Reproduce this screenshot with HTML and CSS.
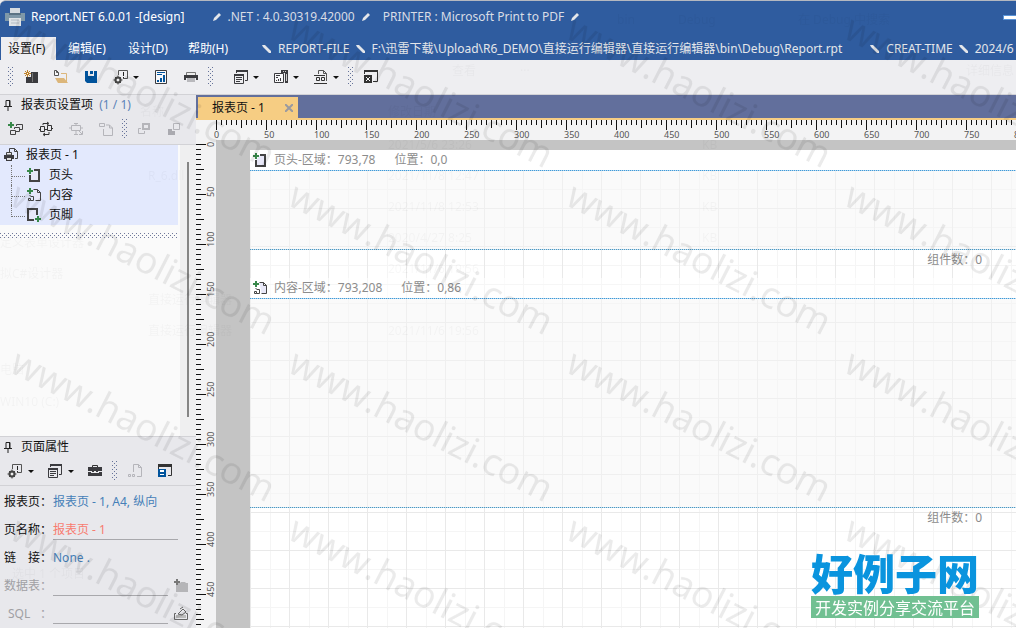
FILE: index.html
```html
<!DOCTYPE html>
<html lang="zh-CN">
<head>
<meta charset="utf-8">
<title>Report.NET 6.0.01 -[design]</title>
<link rel="stylesheet" href="styles.css">
</head>
<body>
<svg class="defs" aria-hidden="true">
  <defs>
    <symbol id="pen" viewBox="0 0 10 10"><path d="M1 9l1-3 5-5 2 2-5 5z" fill="#e4e6ea"/></symbol>
    <symbol id="pen-l" viewBox="0 0 10 10"><path d="M0 1l3 0 6 6v2l-2 0-6-6z" fill="#e4e6ea"/></symbol>
    <symbol id="new" viewBox="0 0 16 16"><path d="M8 3h7v11H3V8h5z" fill="#3b3b3f"/><path d="M9 4h1v9H9z" fill="#777"/><path d="M4.500 1v7M1 4.500h7M2 2l5 5M7 2l-5 5" stroke="#c08228"/><path d="M4 4h1v1H4z" fill="#fff"/></symbol>
    <symbol id="open" viewBox="0 0 16 16"><path d="M1.500 1.500h2l2 2v3h-4zM3.500 1.500v2h2" fill="#f8f8fa" stroke="#555"/><path d="M8 4.500h5.500V13" fill="none" stroke="#dcb67a"/><path d="M2 9h9l4 5H5z" fill="#dcb67a"/></symbol>
    <symbol id="save" viewBox="0 0 16 16"><path d="M2 2h3v5h6V2h3v12H4l-2-2z" fill="#00539c"/><path d="M7 2h3v3H7z" fill="#00539c"/></symbol>
    <symbol id="cfg" viewBox="0 0 16 16"><path d="M5.500 6V1.500h9v8H10" fill="none" stroke="#555"/><path d="M10 3h1v4h-1zM10 8h1v1h-1z" fill="#222"/><circle cx="5" cy="11" r="2.500" fill="none" stroke="#444" stroke-width="2"/><path d="M5 6.500v9M.5 11h9M2 8l6 6M8 8l-6 6" stroke="#444"/><circle cx="5" cy="11" r="1.300" fill="#eee"/></symbol>
    <symbol id="chart" viewBox="0 0 16 16"><path d="M2.500 1.500h11v13h-11z" fill="#f8f8fa" stroke="#3b3b3f"/><path d="M4 3h8v1H4zM4 5h5v1H4z" fill="#00539c"/><path d="M4 11h2v2H4zM7 9h2v4H7zM10 6h2v7h-2z" fill="#00539c"/></symbol>
    <symbol id="print" viewBox="0 0 16 16"><path d="M3.500 3.500h9V7h-9z" fill="#eee" stroke="#777"/><path d="M1 6h14v5h-2V9H3v2H1z" fill="#3b3b3f"/><path d="M4 9h8v4H4z" fill="#b9b9bd"/></symbol>
    <symbol id="pages" viewBox="0 0 16 16"><path d="M3 1h12v2H3zM1 5h10v2H1z" fill="#3b3b3f"/><path d="M3.500 4V1.500h11v10H12M1.500 5.500h9v9h-9z" fill="none" stroke="#3b3b3f"/><path d="M3 8.500h6M3 10.500h6M3 12.500h4" stroke="#3b3b3f"/></symbol>
    <symbol id="report" viewBox="0 0 16 16"><path d="M8 1h7v13h-3V4H8z" fill="#3b3b3f"/><path d="M1.500 4.500h9v9h-9z" fill="#f8f8fa" stroke="#3b3b3f"/><path d="M3 6.500h4M3 8.500h2" stroke="#3b3b3f"/><path d="M3 11h1v1H3zM5 10h1v2H5zM7 9h1v3H7z" fill="#3b3b3f"/><path d="M10 2h1v1h-1zM12 2h1v1h-1zM13 5h1v7h-1z" fill="#ccc"/></symbol>
    <symbol id="label" viewBox="0 0 16 16"><path d="M5.500 5V1.500h5l3 3V12M10.500 1.500v3h3" fill="none" stroke="#555"/><path d="M1 6.500h11M1 14.500h13" stroke="#333"/><path d="M3.500 8.500h3v3h-3zM8.500 8.500h3v3h-3z" fill="none" stroke="#333"/></symbol>
    <symbol id="closewin" viewBox="0 0 16 16"><path d="M1 1h14v2H1z" fill="#333"/><path d="M1.500 3v2M14.500 3v9.500H10" fill="none" stroke="#333"/><path d="M1 6h8v8H1z" fill="#333"/><path d="M3 8l4 4M7 8l-4 4" stroke="#fff"/></symbol>
    <symbol id="pin" viewBox="0 0 10 14"><path d="M3 2.500h4v6H3zM1 8.500h8M5 9v4M6.500 3v6" fill="none" stroke="#222"/></symbol>
    <symbol id="addset" viewBox="0 0 16 16"><path d="M8.500 5V3.500h6v5H12M6.500 8V6.500h5v4H8M2.500 9.500h5v4h-5z" fill="none" stroke="#444"/><path d="M3 1v6M0 4h6" stroke="#38884a" stroke-width="2"/></symbol>
    <symbol id="swap" viewBox="0 0 16 16"><path d="M2.500 5.500h4v5h-4zM9.500 4.500h4v5h-4zM1 8.500h2M13 7.500h2M6 8.500h4M5 4V2.500h5M9 1l2 1.500L9 4M11 11v2.500H6M7 12l-2 1.500L7 15" fill="none" stroke="#333"/></symbol>
    <symbol id="move" viewBox="0 0 16 16"><path d="M3.500 4.500h9v5h-9zM8 2v2M8 10v3M1 7h2M13 7h2M11 10l3 3M14.500 10v3.500H11M6 2.500h4M6 13.500h4" fill="none" stroke="#b5b5ba"/></symbol>
    <symbol id="copy" viewBox="0 0 16 16"><path d="M1.500 2.500h5v3h-5zM5.500 8v6.500h9V7l-3-3H8M11.500 4v3h3" fill="none" stroke="#b5b5ba"/></symbol>
    <symbol id="front" viewBox="0 0 16 16"><path d="M7 3h6v5H7z" fill="none" stroke="#b5b5ba" stroke-width="2"/><path d="M5 7.500H2.500v5h6V10" fill="none" stroke="#b5b5ba"/></symbol>
    <symbol id="back" viewBox="0 0 16 16"><path d="M7.500 2.500h6v6h-6z" fill="none" stroke="#b5b5ba"/><path d="M2 8h4v2h3v4H2z" fill="#aaaab0"/></symbol>
    <symbol id="printdoc" viewBox="0 0 16 16"><path d="M6.500 5V1.500h5l3 3v7H12M11.500 1.500v3h3" fill="none" stroke="#444"/><path d="M1 8h10v4H9v2H3v-2H1z" fill="#3b3b3f"/><path d="M3.500 5.500h5V8h-5z" fill="#eee" stroke="#444"/><path d="M4 11h4v2H4z" fill="#ddd"/></symbol>
    <symbol id="head" viewBox="0 0 16 16"><path d="M8 3h5v11H4V8" fill="#e8e8f8" stroke="#444" stroke-width="2"/><path d="M4 1v6M1 4h6" stroke="#38884a" stroke-width="2"/></symbol>
    <symbol id="content" viewBox="0 0 16 16"><path d="M7.500 2.500h4l3 3v8h-5M11.500 2.500v3h3M4 8v1" fill="#e8e8f8" stroke="#444"/><path d="M2.500 11.500h2v2h-2zM4.500 9.500h3v4h-3" fill="none" stroke="#444"/><path d="M4 1v6M1 4h6" stroke="#38884a" stroke-width="2"/></symbol>
    <symbol id="foot" viewBox="0 0 16 16"><path d="M8 13H2V2h9v6" fill="#e8e8f8" stroke="#444" stroke-width="2"/><path d="M12 9v6M9 12h6" stroke="#38884a" stroke-width="2"/></symbol>
    <symbol id="toolbox" viewBox="0 0 16 16"><path d="M5.500 5V2.500h5V5" fill="none" stroke="#333"/><path d="M1 4h14v4h-4v1H5V8H1zM1 9h3v1h8V9h3v4H1z" fill="#3b3b3f"/><path d="M7 8h2v2H7z" fill="#eee"/></symbol>
    <symbol id="docoff" viewBox="0 0 16 16"><path d="M6.500 9V1.500h5l3 3v9H10M11.500 1.500v3h3M1.500 11.500h2v2h-2zM5.500 11.500h2v2h-2z" fill="none" stroke="#b5b5ba"/></symbol>
    <symbol id="savewin" viewBox="0 0 16 16"><path d="M1 1h14v3H1z" fill="#333"/><path d="M14.500 3v9.500H11M1.500 3v3" fill="none" stroke="#333"/><path d="M1 6h8v8H1z" fill="#00539c"/><path d="M3 7h4v2H3zM3 11h4v1H3z" fill="#fff"/></symbol>
    <symbol id="addfolder" viewBox="0 0 16 16"><path d="M3 5h4l1-1h4l1 1h2v9H3z" fill="#b5b5b8"/><path d="M4 1v6M1 4h6" stroke="#777" stroke-width="2"/></symbol>
    <symbol id="edit" viewBox="0 0 16 16"><path d="M3 7.500H1.500v6h13v-6H13" fill="none" stroke="#666"/><path d="M3 9h10v3H3z" fill="#bbb"/><path d="M5 8l5-5 3 3-4 3z" fill="#e8e8ec" stroke="#666"/><path d="M7 3l3-2" stroke="#666"/></symbol>
  </defs>
</svg>

<header class="titlebar">
  <svg class="logo" viewBox="0 0 20 20" aria-hidden="true"><path d="M5 1h10v6H5z" fill="#d5dbe0"/><path d="M0 6h20v8H0z" fill="#7f98a8"/><path d="M4 6h12v2H4z" fill="#5b7384"/><path d="M4 11h12v8H4z" fill="#dfe3e6"/><path d="M6 13h8M6 16h8" stroke="#b3bcc4"/></svg>
  <h1>Report.NET 6.0.01 -[design]</h1>
  <p class="info"><svg class="pen"><use href="#pen"/></svg><span>.NET : 4.0.30319.42000</span><svg class="pen"><use href="#pen"/></svg></p>
  <p class="info"><span>PRINTER : Microsoft Print to PDF</span><svg class="pen"><use href="#pen"/></svg></p>
  <button class="minimize" aria-label="最小化"></button>
</header>

<nav class="menubar">
  <button class="menu active">设置(F)</button>
  <button class="menu">编辑(E)</button>
  <button class="menu">设计(D)</button>
  <button class="menu">帮助(H)</button>
  <p class="file"><svg class="pen"><use href="#pen-l"/></svg><span>REPORT-FILE</span><svg class="pen"><use href="#pen-l"/></svg><span>F:\迅雷下载\Upload\R6_DEMO\直接运行编辑器\直接运行编辑器\bin\Debug\Report.rpt</span></p>
  <p class="file"><svg class="pen"><use href="#pen-l"/></svg><span>CREAT-TIME</span><svg class="pen"><use href="#pen-l"/></svg><span>2024/6</span></p>
</nav>

<div class="toolbar">
  <i class="grip"></i>
  <button class="tool" aria-label="新建"><svg><use href="#new"/></svg></button>
  <button class="tool" aria-label="打开"><svg><use href="#open"/></svg></button>
  <button class="tool" aria-label="保存"><svg><use href="#save"/></svg></button>
  <button class="tool drop" aria-label="设置"><svg><use href="#cfg"/></svg></button>
  <button class="tool" aria-label="预览"><svg><use href="#chart"/></svg></button>
  <button class="tool" aria-label="打印"><svg><use href="#print"/></svg></button>
  <i class="grip wide"></i>
  <button class="tool drop" aria-label="页面"><svg><use href="#pages"/></svg></button>
  <button class="tool drop" aria-label="报表"><svg><use href="#report"/></svg></button>
  <button class="tool drop" aria-label="标签"><svg><use href="#label"/></svg></button>
  <i class="grip"></i>
  <button class="tool" aria-label="关闭"><svg><use href="#closewin"/></svg></button>
</div>

<main class="workspace">
  <aside class="side">
    <section class="settings">
      <div class="panel-head">
        <h2><svg class="pin"><use href="#pin"/></svg>报表页设置项 <span class="count"> (1 / 1)</span></h2>
        <div class="panel-tools">
          <button class="tool" aria-label="添加"><svg><use href="#addset"/></svg></button>
          <button class="tool" aria-label="交换"><svg><use href="#swap"/></svg></button>
          <button class="tool" aria-label="移动"><svg><use href="#move"/></svg></button>
          <button class="tool" aria-label="复制"><svg><use href="#copy"/></svg></button>
          <i class="grip"></i>
          <button class="tool" aria-label="置前"><svg><use href="#front"/></svg></button>
          <button class="tool" aria-label="置后"><svg><use href="#back"/></svg></button>
        </div>
      </div>
      <div class="tree-area">
        <div class="tree-main">
          <div class="tree">
            <p class="root"><svg><use href="#printdoc"/></svg>报表页 - 1</p>
            <ul>
              <li><svg><use href="#head"/></svg>页头</li>
              <li><svg><use href="#content"/></svg>内容</li>
              <li><svg><use href="#foot"/></svg>页脚</li>
            </ul>
          </div>
          <div class="splitter"></div>
        </div>
        <div class="scroll"><i></i></div>
      </div>
    </section>
    <section class="props">
      <div class="panel-head">
        <h2><svg class="pin"><use href="#pin"/></svg>页面属性</h2>
        <div class="panel-tools">
          <button class="tool drop" aria-label="设置"><svg><use href="#cfg"/></svg></button>
          <button class="tool drop" aria-label="页面"><svg><use href="#pages"/></svg></button>
          <button class="tool" aria-label="工具箱"><svg><use href="#toolbox"/></svg></button>
          <i class="grip"></i>
          <button class="tool" aria-label="文档"><svg><use href="#docoff"/></svg></button>
          <button class="tool" aria-label="保存窗口"><svg><use href="#savewin"/></svg></button>
        </div>
      </div>
      <form class="fields">
        <div class="field"><span class="name">报表页：</span><a href="#">报表页 - 1, A4, 纵向</a></div>
        <div class="field"><label class="name" for="pname">页名称：</label><input class="long" id="pname" value="报表页 - 1"></div>
        <div class="field"><span class="name">链　接：</span><a href="#">None .</a></div>
        <div class="field off"><label class="name" for="table">数据表：</label><input id="table" disabled><button type="button" class="pick" aria-label="选择数据表"><svg><use href="#addfolder"/></svg></button></div>
        <div class="field off"><label class="name sql" for="sql"><span>SQL</span><span>：</span></label><input id="sql" disabled><button type="button" class="pick" aria-label="编辑 SQL"><svg><use href="#edit"/></svg></button></div>
      </form>
    </section>
  </aside>

  <section class="editor">
    <div class="tabs"><div class="tab"><span>报表页 - 1</span><button class="close" aria-label="关闭标签"><svg viewBox="0 0 8 8"><path d="M0 0l8 8M8 0l-8 8" stroke="#9a9aa0" stroke-width="2"/></svg></button></div></div>
    <div class="ruled">
      <div class="corner"></div>
      <div class="ruler-x"><span>0</span><span>50</span><span>100</span><span>150</span><span>200</span><span>250</span><span>300</span><span>350</span><span>400</span><span>450</span><span>500</span><span>550</span><span>600</span><span>650</span><span>700</span><span>750</span><span>800</span></div>
      <div class="ruler-y"><span class="zero">0</span><span>50</span><span>100</span><span>150</span><span>200</span><span>250</span><span>300</span><span>350</span><span>400</span><span>450</span></div>
      <div class="desk">
        <div class="page">
          <div class="band-title first"><svg><use href="#head"/></svg><span>页头-区域：793,78</span><span>位置：0,0</span></div>
          <div class="band header"></div>
          <div class="band-count">组件数：0</div>
          <div class="band-title"><svg><use href="#content"/></svg><span>内容-区域：793,208</span><span>位置：0,86</span></div>
          <div class="band content"></div>
          <div class="band-count">组件数：0</div>
        </div>
      </div>
    </div>
  </section>
</main>

<svg class="overlay behind" aria-hidden="true">
  <text x="617" y="24">bin</text><text x="678" y="24">Debug</text><text x="798" y="24">在 Debug 中搜索</text>
  <text x="452" y="75">查看</text><text x="520" y="75">···</text><text x="966" y="75">详细信息</text>
  <text x="140" y="116">名称</text><text x="388" y="116">修改日期</text>
  <text x="148" y="180">R_6.dll</text><text x="148" y="304">直接运行编辑器</text><text x="148" y="335">直接运行编辑器</text>
  <text x="388" y="149">2021/5/6 23:26</text><text x="388" y="180">2021/11/8 12:47</text><text x="388" y="211">2021/11/8 12:53</text><text x="388" y="242">2020/4/27 8:25</text><text x="388" y="273">2021/11/6 19:56</text><text x="388" y="335">2021/11/6 19:56</text>
  <text x="702" y="149">KB</text><text x="702" y="180">KB</text><text x="702" y="211">KB</text><text x="702" y="242">KB</text>
  <text x="0" y="247">定义表单设计器</text><text x="0" y="278">拟C#设计器</text><text x="0" y="374">电脑</text><text x="0" y="406">WIN10 (C:)</text><text x="12" y="578">选中 1 个项目</text>
</svg>

<svg class="overlay watermark" aria-hidden="true">
  <g transform="translate(12 20)"><text class="wm">www.haolizi.com</text></g>
  <g transform="translate(290 20)"><text class="wm">www.haolizi.com</text></g>
  <g transform="translate(568 20)"><text class="wm">www.haolizi.com</text></g>
  <g transform="translate(846 20)"><text class="wm">www.haolizi.com</text></g>
  <g transform="translate(12 187)"><text class="wm">www.haolizi.com</text></g>
  <g transform="translate(290 187)"><text class="wm">www.haolizi.com</text></g>
  <g transform="translate(568 187)"><text class="wm">www.haolizi.com</text></g>
  <g transform="translate(846 187)"><text class="wm">www.haolizi.com</text></g>
  <g transform="translate(12 354)"><text class="wm">www.haolizi.com</text></g>
  <g transform="translate(290 354)"><text class="wm">www.haolizi.com</text></g>
  <g transform="translate(568 354)"><text class="wm">www.haolizi.com</text></g>
  <g transform="translate(846 354)"><text class="wm">www.haolizi.com</text></g>
  <g transform="translate(12 521)"><text class="wm">www.haolizi.com</text></g>
  <g transform="translate(290 521)"><text class="wm">www.haolizi.com</text></g>
  <g transform="translate(568 521)"><text class="wm">www.haolizi.com</text></g>
  <g transform="translate(846 521)"><text class="wm">www.haolizi.com</text></g>
</svg>

<div class="brand"><strong>好例子网</strong><span>开发实例分享交流平台</span></div>
</body>
</html>
```
FILE: styles.css
```css
* { box-sizing: border-box; margin: 0; padding: 0; }
body {
  height: 100vh;
  display: flex;
  flex-direction: column;
  overflow: hidden;
  background: #eeeef1;
  color: #111;
  font: 12px/20px "Noto Sans", "Noto Sans CJK SC", sans-serif;
  white-space: nowrap;
}
button { border: 0; background: none; font: inherit; color: inherit; }
svg { width: 16px; height: 16px; flex: none; }
h1, h2 { font-size: 12px; font-weight: 400; }
.defs { position: absolute; width: 0; height: 0; }
svg.pen { width: 10px; height: 10px; }

.titlebar {
  flex: none;
  display: flex;
  align-items: center;
  height: 37px;
  padding: 0 0 4px 5px;
  border-top: 1px solid #b4b8c0;
  border-top-left-radius: 6px;
  background: #2f5c9f;
  color: #fff;
}
.logo { width: 20px; height: 20px; margin-right: 6px; }
.titlebar h1 { margin-right: 27px; }
.info { display: flex; align-items: center; gap: 6px; margin-right: 12px; color: #d9dde6; }
.minimize { width: 13px; height: 5px; margin-left: auto; border: 1px solid #5a94d8; border-right: 0; background: #fff; }

.menubar {
  flex: none;
  display: flex;
  height: 23px;
  padding-left: 1px;
  overflow: hidden;
  background: #2f5c9f;
  color: #fff;
}
.menu { flex: none; width: 55px; margin-right: 5px; padding-left: 7px; text-align: left; }
.menu.active { background: #eeeef1; color: #111; }
.file { flex: none; display: flex; align-items: center; gap: 6px; margin-left: 28px; color: #e4e6ea; }
.menu + .file { margin-left: 21px; }

.toolbar {
  flex: none;
  display: flex;
  align-items: center;
  height: 35px;
  padding-left: 6px;
  border-bottom: 1px solid #d2d2d6;
}
.grip {
  flex: none;
  width: 6px;
  height: 20px;
  margin: 0 2px;
  background-image: conic-gradient(from 270deg at 1px 1px, #66739a 90deg, transparent 0), conic-gradient(from 270deg at 1px 1px, #66739a 90deg, transparent 0);
  background-size: 4px 4px;
  background-position: 0 0, 2px 2px;
}
.grip.wide { margin-right: 12px; }
.tool { flex: none; display: flex; align-items: center; justify-content: center; width: 30px; height: 24px; }
.tool.drop { justify-content: flex-start; gap: 4px; width: 40px; padding-left: 7px; }
.tool.drop::after { content: ""; border: 3px solid transparent; border-top-color: #111; border-bottom: 0; }

.workspace { flex: 1; display: grid; grid-template-columns: 196px minmax(0, 1fr); min-height: 0; }
.side { display: flex; flex-direction: column; min-height: 0; }
.settings { flex: 1; display: flex; flex-direction: column; min-height: 0; }
.panel-head { flex: none; height: 50px; background: #e8e8ec; border-bottom: 1px solid #d2d2d6; }
.panel-head h2 { display: flex; align-items: center; height: 20px; padding-left: 3px; white-space: pre; }
.pin { width: 10px; height: 14px; margin-right: 8px; }
.count { color: #5c84b8; }
.panel-tools { display: flex; align-items: center; height: 28px; padding-left: 1px; }
.settings .grip { margin: 0 1px; }

.tree-area { flex: 1; display: flex; }
.tree-main { flex: 1; background: #fafafa; }
.tree { width: 178px; background: #e3e9fd; }
.root, .tree li { display: flex; align-items: center; height: 20px; }
.root { padding-left: 3px; gap: 7px; }
.tree ul { list-style: none; margin-left: 11px; }
.tree li { position: relative; gap: 7px; padding-left: 15px; }
.tree li::before { content: ""; position: absolute; left: 0; top: 0; width: 13px; height: 11px; border-left: 1px dotted #777; border-bottom: 1px dotted #777; }
.tree li:not(:last-child)::after { content: ""; position: absolute; left: 0; top: 11px; height: 9px; border-left: 1px dotted #777; }
.splitter {
  width: 178px;
  height: 5px;
  margin-top: 8px;
  background-image: conic-gradient(from 270deg at 1px 1px, #70789a 90deg, transparent 0), conic-gradient(from 270deg at 1px 1px, #70789a 90deg, transparent 0);
  background-size: 4px 4px;
  background-position: 0 0, 2px 2px;
}
.scroll { flex: none; width: 16px; padding: 17px 7px 19px; background: #efeff0; }
.scroll i { display: block; width: 2px; height: 100%; background: #858585; }

.props { flex: none; background: #e8e8ec; border-top: 1px solid #d2d2d6; }
.props .panel-head { height: 49px; }
.props .panel-tools { padding-left: 0; }
.props .drop { gap: 5px; }
.fields { padding: 2px 0 0 4px; }
.field { display: flex; align-items: center; height: 28px; }
.name { flex: none; width: 49px; }
.sql { display: flex; justify-content: space-between; padding: 0 1px 0 4px; }
.field a { color: #4680b8; text-decoration: none; }
.field input {
  width: 115px;
  height: 20px;
  border: 0;
  border-bottom: 1px solid #a8a8ac;
  background: none;
  font: inherit;
  color: #f87c70;
}
.field input.long { width: 125px; }
.off { color: #a0a0a4; }
.pick { display: flex; margin-left: 5px; }

.editor { display: flex; flex-direction: column; min-height: 0; }
.tabs { flex: none; height: 25px; padding: 2px 0 0 2px; background: #626f9c; border-bottom: 2px solid #f6cd83; }
.tab { display: flex; align-items: center; justify-content: space-between; width: 100px; height: 21px; padding: 0 5px 0 14px; background: #f6cd83; }
.close { display: flex; }
.close svg { width: 8px; height: 8px; }
.ruled { flex: 1; display: grid; grid-template: 20px minmax(0, 1fr) / 20px minmax(0, 1fr); min-height: 0; }
.corner { grid-area: 1 / 1; background: #f3f3f4; }
.ruler-x, .ruler-y { display: flex; overflow: hidden; color: #555; font-size: 9px; line-height: 10px; }
.ruler-x {
  grid-area: 1 / 2;
  margin-left: -2px;
  padding-top: 10px;
  background:
    linear-gradient(90deg, #111 1px, transparent 1px) 2px 0 / 50px 10px repeat-x,
    linear-gradient(90deg, #111 1px, transparent 1px) 2px 0 / 25px 8px repeat-x,
    linear-gradient(90deg, #111 1px, transparent 1px) 2px 0 / 5px 5px repeat-x,
    #f3f3f4;
}
.ruler-x span { flex: none; width: 50px; }
.ruler-y {
  grid-area: 2 / 1;
  flex-direction: column;
  padding-left: 10px;
  background:
    linear-gradient(#111 1px, transparent 1px) 0 4px / 10px 50px repeat-y,
    linear-gradient(#111 1px, transparent 1px) 0 4px / 8px 25px repeat-y,
    linear-gradient(#111 1px, transparent 1px) 0 4px / 5px 5px repeat-y,
    #f3f3f4;
}
.ruler-y span { flex: none; width: 10px; height: 50px; writing-mode: vertical-rl; transform: rotate(180deg); }
.ruler-y .zero { height: 7px; }
.desk { grid-area: 2 / 2; display: flex; padding: 10px 0 0 34px; overflow: hidden; background: #c4c4c4; }
.page {
  flex: 1;
  background:
    linear-gradient(90deg, transparent 38px, #e9e9e9 38px) 1px 0 / 39px 38px,
    linear-gradient(transparent 37px, #e9e9e9 37px) 0 21px / 39px 38px,
    linear-gradient(90deg, transparent 19px, #f5f5f5 19px, #f5f5f5 20px, transparent 20px) 1px 0 / 39px 38px,
    linear-gradient(transparent 18px, #f5f5f5 18px, #f5f5f5 19px, transparent 19px) 0 21px / 39px 38px,
    #fff;
}
.band-title { display: flex; align-items: center; gap: 6px; height: 20px; padding-left: 2px; background: rgba(255, 255, 255, .6); color: #8c8c8c; }
.band-title.first { background: #fff; }
.band-title span + span { margin-left: 13px; }
.band {
  background:
    repeating-linear-gradient(90deg, #3f9ad8 0 1px, #b4d6ee 1px 2px) top / 100% 1px no-repeat,
    repeating-linear-gradient(90deg, #4a98c4 0 1px, #c4dcea 1px 2px) bottom / 100% 1px no-repeat,
    rgba(246, 246, 246, .5);
}
.band.header { height: 80px; }
.band.content { height: 210px; }
.band-count { height: 28px; padding-right: 34px; text-align: right; color: #8c8c8c; }

.overlay { position: fixed; inset: 0; width: 100%; height: 100%; pointer-events: none; }
.behind { fill: rgba(0, 0, 0, .03); }
.wm { font-family: "Open Sans", sans-serif; font-size: 37px; fill: rgba(0, 0, 0, .08); stroke: rgba(0, 0, 0, .02); transform: translate(-4px, 17px) rotate(27deg); }
.brand { position: fixed; right: 37px; bottom: 10px; display: flex; flex-direction: column; font-family: "Noto Sans CJK SC", sans-serif; }
.brand strong { color: #0a94de; font-size: 42px; font-weight: 900; line-height: 48px; }
.brand span { background: #71c092; color: #fff; font-size: 16px; line-height: 22px; text-align: center; }
```
